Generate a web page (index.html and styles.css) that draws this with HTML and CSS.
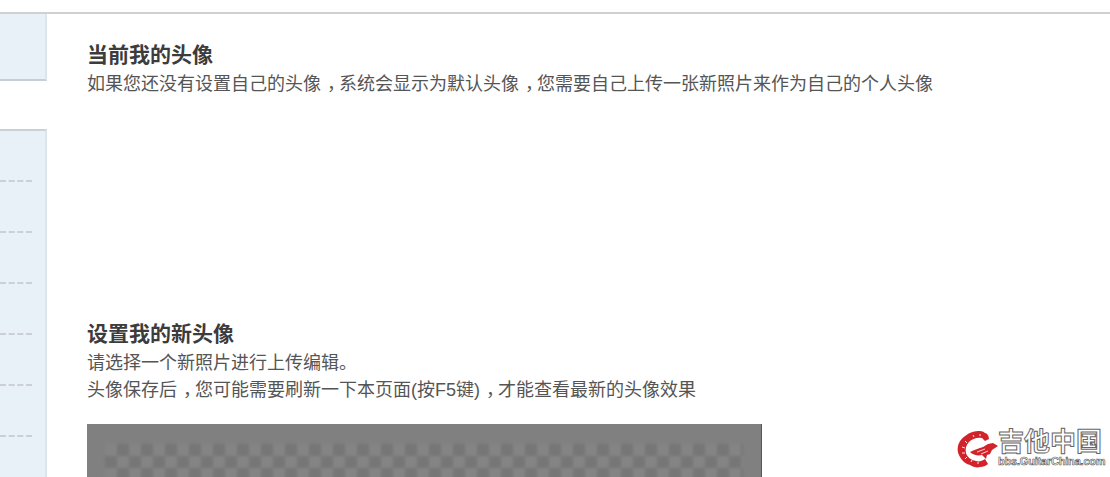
FILE: index.html
```html
<!DOCTYPE html>
<html lang="zh-CN">
  <head>
    <meta charset="UTF-8" />
    <title>设置头像</title>
    <link rel="stylesheet" href="styles.css">
  </head>
  <body>
    <div class="page">
      <!-- ======= Sidebar ======= -->
      <aside class="sidebar">
        <div class="side-top"></div>
        <div class="side-menu">
          <div class="side-row"></div>
          <div class="side-row"></div>
          <div class="side-row"></div>
          <div class="side-row"></div>
          <div class="side-row"></div>
          <div class="side-row"></div>
        </div>
      </aside>

      <!-- ======= Avatar Content ======= -->
      <main class="content">
        <h2 class="title">当前我的头像</h2>
        <p class="line">如果您还没有设置自己的头像<span class="comma">，</span>系统会显示为默认头像<span class="comma">，</span>您需要自己上传一张新照片来作为自己的个人头像</p>
        <div class="avatar-space"></div>
        <h2 class="title">设置我的新头像</h2>
        <p class="line">请选择一个新照片进行上传编辑。</p>
        <p class="line">头像保存后<span class="comma">，</span>您可能需要刷新一下本页面(按F5键)<span class="comma">，</span>才能查看最新的头像效果</p>
        <div class="uploader">
          <div class="checker"></div>
        </div>
      </main>
    </div>

    <!-- ======= Watermark ======= -->
    <div class="watermark">
      <svg class="dragon" viewBox="0 0 45 42" width="45" height="42">
        <path d="M34 11C34 8 32 5 30 5C28 3 25 3 23 3C18 3 13 6 13 6C8 9 4 13 3 18C2 22 3 26 5 29C7 33 11 36 15 37C18 39 22 40 25 39C28 39 31 38 33 36L30 31C27 33 24 34 21 33C16 32 12 29 11 25C10 21 11 17 14 14C17 11 22 9 27 10L30 13Z" fill="#d2232a" />
        <path d="M15 24C19 22 24 20 28 19L33 16L38 15L43 18L37 22L35 26L32 27L31 31L27 27C23 28 18 27 15 24Z" fill="#d2232a" />
        <path d="M10 13L12 15M7 19L10 20M7 25L10 25M10 31L12 29M16 34L17 32M23 36L23 34M18 7L19 9M25 6L25 8" stroke="#fff" stroke-width="0.9" fill="none" />
        <path d="M22 24L30 21M26 26L33 23" stroke="#fff" stroke-width="0.8" fill="none" />
      </svg>
      <div class="mark-text">
        <div class="mark-cn">吉他中国</div>
        <div class="mark-url">bbs.GuitarChina.com</div>
      </div>
    </div>
  </body>
</html>
```

FILE: styles.css
```css
/* ======= Page ======= */
html,
body {
  margin: 0;
  padding: 0;
  height: 477px;
  overflow: hidden;
  background: #fff;
}

body {
  font-family: "Liberation Sans", "Noto Sans CJK SC", sans-serif;
  color: #444;
  position: relative;
}

.page {
  display: flex;
  margin-top: 12px;
  border-top: 2px solid #d0d0d0;
  height: 463px;
  overflow: hidden;
}

/* ======= Sidebar ======= */
.sidebar {
  width: 47px;
  flex-shrink: 0;
}

.side-top {
  height: 67px;
  background: #e8f0f8;
  border-right: 2px solid #dde4ea;
  border-bottom: 2px solid #c8ced4;
  box-sizing: border-box;
}

.side-menu {
  margin-top: 48px;
  height: 400px;
  background: #e8f0f8;
  border-top: 2px solid #c8d2dc;
  border-right: 2px solid #dde4ea;
  box-sizing: border-box;
}

.side-row {
  height: 51px;
  box-sizing: border-box;
  border-bottom: 2px dashed #ccd0d4;
  margin-right: 13px;
}

/* ======= Content ======= */
.content {
  flex: 1;
  padding: 27px 0 0 40px;
}

.title {
  margin: 0;
  font-size: 21px;
  line-height: 28px;
  font-weight: bold;
  color: #3c3c3c;
}

.line {
  margin: 0;
  font-size: 18px;
  line-height: 27px;
  color: #555;
}

.title + .line {
  margin-top: 2px;
}

/* full-width comma sits in the middle of its cell in the original font */
.comma {
  padding-left: 0.33em;
  letter-spacing: -0.33em;
}

.avatar-space {
  height: 222px;
}

.uploader {
  margin-top: 20px;
  width: 675px;
  height: 60px;
  background: #808080;
  box-sizing: border-box;
  border-right: 1px solid #555;
  padding: 20px 18px 0;
  overflow: hidden;
}

.checker {
  height: 60px;
  background-color: #808080;
  background-image: conic-gradient(#767676 25%, #848484 0 50%, #767676 0 75%, #848484 0);
  background-size: 24px 24px;
  filter: blur(1.5px);
}

/* ======= Watermark ======= */
.watermark {
  position: absolute;
  left: 955px;
  top: 428px;
  display: flex;
}

.mark-text {
  display: flex;
  flex-direction: column;
  width: 104px;
  margin-left: -2px;
}

.mark-cn {
  font-size: 26px;
  line-height: 28px;
  color: #fff;
  font-weight: bold;
  -webkit-text-stroke: 1px #666;
  white-space: nowrap;
}

.mark-url {
  font-family: "Liberation Sans Narrow", "Liberation Sans", sans-serif;
  font-size: 11px;
  line-height: 11px;
  color: #fff;
  font-weight: bold;
  -webkit-text-stroke: 0.6px #555;
  white-space: nowrap;
  letter-spacing: -0.2px;
}
```
